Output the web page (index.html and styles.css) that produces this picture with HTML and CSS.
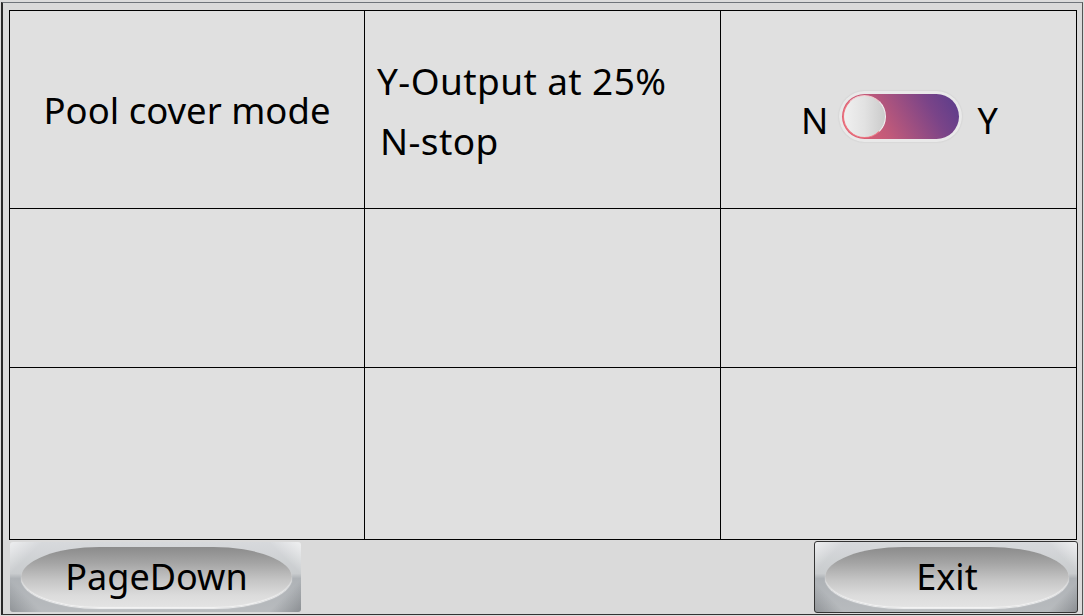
FILE: index.html
```html
<!DOCTYPE html>
<html lang="en">
<head>
    <meta charset="UTF-8">
    <title>Pool cover mode</title>
    <link rel="stylesheet" href="styles.css">
</head>
<body>
    <div class="frame">
        <div class="grid">
            <div class="row row-top">
                <div class="cell cell-label">Pool cover mode</div>
                <div class="cell cell-desc">
                    <p>Y-Output at 25%</p>
                    <p class="second">N-stop</p>
                </div>
                <div class="cell cell-switch">
                    <span class="sw-text">N</span>
                    <span class="switch"><span class="track"><span class="knob"></span></span></span>
                    <span class="sw-text sw-y">Y</span>
                </div>
            </div>
            <div class="row row-mid">
                <div class="cell"></div>
                <div class="cell"></div>
                <div class="cell"></div>
            </div>
            <div class="row row-low">
                <div class="cell"></div>
                <div class="cell"></div>
                <div class="cell"></div>
            </div>
        </div>
        <div class="footer">
            <button class="metal-btn btn-page"><span class="pill">PageDown</span></button>
            <button class="metal-btn btn-exit"><span class="pill">Exit</span></button>
        </div>
    </div>
</body>
</html>
```

FILE: styles.css
```css
body {
    margin: 0;
    width: 1084px;
    height: 616px;
    overflow: hidden;
    background-color: #dcdcdc;
    font-family: "Noto Sans", "Open Sans", sans-serif;
    color: #000;
}

.frame {
    box-sizing: border-box;
    margin: 2px 1px 0 1px;
    height: 613px;
    border-top: 1px solid #6f747a;
    border-left: 2px solid #2a2a2a;
    border-right: 1px solid #555;
    border-bottom: 1px solid #333;
    padding: 7px 5px 0 6px;
    background-color: #dadada;
}

.grid {
    border: 1px solid #000;
    border-bottom: none;
}

.row {
    display: grid;
    grid-template-columns: 355px 356px 1fr;
    border-bottom: 1px solid #000;
    background-color: #e0e0e0;
}

.row-top { height: 197px; }
.row-mid { height: 158px; }
.row-low { height: 171px; }

.cell {
    box-sizing: border-box;
    border-right: 1px solid #000;
}

.cell:last-child {
    border-right: none;
}

.cell-label {
    display: flex;
    align-items: center;
    justify-content: center;
    font-size: 36.5px;
}

.cell-desc {
    display: flex;
    flex-direction: column;
    justify-content: center;
    padding-left: 12px;
    padding-top: 2px;
    font-size: 37px;
    letter-spacing: 0.4px;
}

.cell-desc p {
    margin: 0;
    line-height: 60px;
}

.cell-desc .second {
    padding-left: 3px;
}

.cell-switch {
    display: flex;
    align-items: center;
    justify-content: center;
    padding-top: 22px;
    padding-left: 2px;
    font-size: 36px;
}

.sw-text {
    line-height: 1;
}

.switch {
    display: inline-block;
    margin: 0 15px 9px 11px;
    padding: 3px;
    border-radius: 26px;
    background-color: #e9e9e9;
    box-shadow: 0 0 2px rgba(0, 0, 0, 0.12);
}

.track {
    display: block;
    position: relative;
    width: 117px;
    height: 45px;
    border-radius: 23px;
    background: linear-gradient(60deg, #ea6270 0%, #c05a7a 35%, #7a4488 75%, #583c8c 100%);
}

.knob {
    position: absolute;
    top: 1px;
    left: 1px;
    box-sizing: border-box;
    width: 43px;
    height: 43px;
    border-radius: 50%;
    border: 1px solid #ef7882;
    border-right-color: #f2f2f2;
    border-top-color: #f4c6ca;
    background: linear-gradient(to right, #f0f0f0 0%, #e2e2e2 50%, #cbcbcb 100%);
}

.footer {
    display: flex;
    justify-content: space-between;
    align-items: center;
    height: 74px;
}

.metal-btn {
    position: relative;
    box-sizing: border-box;
    display: flex;
    padding: 5px 9px 4px 11px;
    border: none;
    border-radius: 3px;
    font-family: inherit;
    background:
        linear-gradient(135deg, rgba(255,255,255,0.55) 0%, rgba(255,255,255,0) 9%),
        linear-gradient(45deg, rgba(70,75,80,0.35) 0%, rgba(255,255,255,0) 9%),
        linear-gradient(225deg, rgba(255,255,255,0.6) 0%, rgba(255,255,255,0) 9%),
        linear-gradient(315deg, rgba(70,75,80,0.4) 0%, rgba(255,255,255,0) 9%),
        linear-gradient(to bottom, #d7d9dc 0%, #c9ccce 45%, #aeb2b6 52%, #b8bbbe 100%);
}

.btn-page {
    width: 291px;
    height: 70px;
    margin-left: 1px;
}

.btn-exit {
    width: 264px;
    height: 72px;
    margin-right: -1px;
    padding: 5px 8px 4px 10px;
    border: 1px solid #333;
}

.pill {
    flex: 1;
    display: flex;
    align-items: center;
    justify-content: center;
    border-radius: 80px / 31px;
    font-size: 36px;
    color: #000;
    padding-bottom: 3px;
    background: linear-gradient(to bottom, #8b8b8b 0%, #a3a3a3 25%, #c6c6c6 55%, #dcdcdc 80%, #e4e4e4 100%);
    box-shadow: 0 1px 1px rgba(255, 255, 255, 0.8), inset 0 -1px 1px rgba(255, 255, 255, 0.6);
}
```
